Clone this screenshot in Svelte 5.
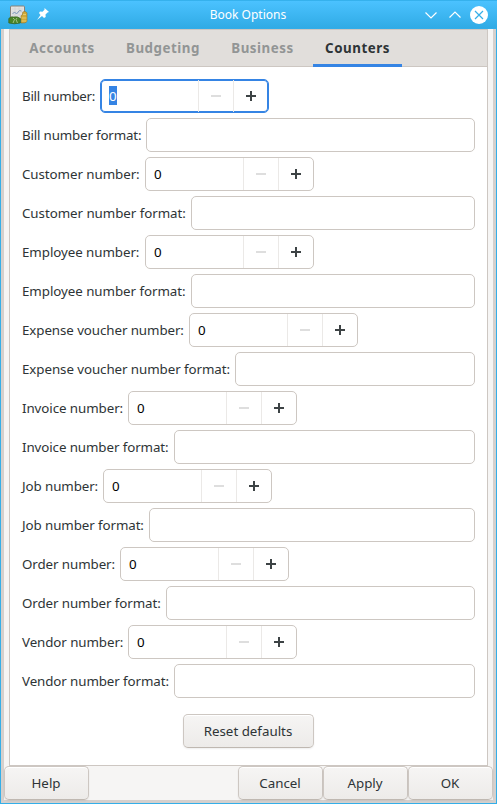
<script>
  // label, label column width, letter spacing, whether the row is a counter
  const rows = [
    ['Bill number', 78, -0.25, true], ['Bill number format', 124, -0.17],
    ['Customer number', 123, -0.06, true], ['Customer number format', 169, -0.05],
    ['Employee number', 123, -0.06, true], ['Employee number format', 169, -0.05],
    ['Expense voucher number', 167, -0.08, true], ['Expense voucher number format', 213, -0.07],
    ['Invoice number', 106, -0.07, true], ['Invoice number format', 152, -0.09],
    ['Job number', 81, -0.09, true], ['Job number format', 127, -0.09],
    ['Order number', 98, -0.08, true], ['Order number format', 144, -0.09],
    ['Vendor number', 106, -0.08, true], ['Vendor number format', 152, -0.09]
  ];
  const tabs = [['Accounts', 88], ['Budgeting', 98], ['Business', 85], ['Counters', 89]];
</script>

<div class="window">
  <header>
    <svg class="app" width="20" height="20" viewBox="0 0 20 20">
      <rect x="2.500" y="1" width="14" height="13" rx="1" fill="#e2e2e0" stroke="#85827b" />
      <path d="M4 4h11M4 7h11M4 10h11M7 2v11M11 2v11" stroke="#cdd1d3" stroke-width=".6" />
      <path d="M4.500 9l2-2 2 2 3-3.500 2 .5" fill="none" stroke="#7794b8" stroke-width="1" />
      <path d="M13 11q0-1 1.500-1V8q0-1.500 2-1.500T19 8v8.500q-1 2-6 1.500z" fill="#cfa93a" stroke="#94762a" stroke-width=".6" />
      <path d="M15 9.500h3M13.500 13h5M13.500 16h5" stroke="#ecd376" stroke-width=".8" />
      <path d="M.8 13.500q2-2.500 5-1.500 4-1 6.500 1.500V18q-6 1.500-11.500 0z" fill="#4a8527" stroke="#356020" stroke-width=".7" />
      <path d="M5 13l1.500 1.500L5 18M9 13l-1 1.500L9.500 18" stroke="#b9cf9c" stroke-width=".8" fill="none" />
    </svg>
    <svg class="pin" width="12" height="12" viewBox="0 0 12 12"><path d="M7.500 0L12 4l-1.500.5-2 2 .2 2.500L7 10 5 8 0 12l3.500-5L2 5l1-1.500 2.500.2 2-2z" fill="#fff" /></svg>
    <span class="title">Book Options</span>
    <svg class="controls" width="68" height="20" viewBox="0 0 68 20">
      <path d="M3.500 11.500l5.500 5.500 5.500-5.500M27.500 16.500l5.500-5.500 5.500 5.500" transform="translate(0 -4)" fill="none" stroke="#fff" stroke-width="1.150" />
      <circle cx="57" cy="10" r="9" fill="#fff" />
      <path d="M53 6l8 8M61 6l-8 8" stroke="#35aee8" stroke-width="1.200" />
    </svg>
  </header>
  <main>
    <section class="notebook">
      <nav>
        {#each tabs as [name, width], i}
          <div class="tab" class:active={i === 3} style="width:{width}px">{name}</div>
        {/each}
      </nav>
      <div class="form">
        {#each rows as [label, width, spacing, spin], i}
          <div class="row">
            <span class="label" style="width:{width}px;letter-spacing:{spacing}px">{label}:</span>
            {#if spin}
              <div class="entry spin" class:focus={i === 0}>
                <span class="value"><span class="digit">0</span></span>
                <span class="step"><svg width="10" height="10"><path d="M0 5h10" stroke="#dedede" stroke-width="2" /></svg></span>
                <span class="step"><svg width="10" height="10"><path d="M0 5h10M5 0v10" stroke="#3d4345" stroke-width="2" /></svg></span>
              </div>
            {:else}
              <div class="entry text"></div>
            {/if}
          </div>
        {/each}
        <button class="reset">Reset defaults</button>
      </div>
    </section>
    <footer>
      <button>Help</button><span class="space"></span>
      <button>Cancel</button><button>Apply</button><button>OK</button>
    </footer>
  </main>
</div>

<style>
  :global(body) { margin: 0; }
  * { box-sizing: border-box; }
  .window { width: 497px; height: 804px; display: flex; flex-direction: column; background: #34aee8; padding: 0 1px 1px; font: 13.333px "Noto Sans", sans-serif; color: #2e3436; }
  header { height: 29px; margin: 0 -1px; flex: none; display: flex; align-items: center; padding: 0 7px 0 8px; background: linear-gradient(#35b1ed 0 1px, #4bc2ff 1px, #30abe5 28px, #35aeeb); }
  .app { margin-top: 1px; }
  .pin { margin-left: 9px; margin-top: -2px; }
  .title { flex: 1; color: #fff; font-size: 12px; line-height: 16px; text-align: center; padding-left: 25px; }
  .controls { flex: none; }
  main { flex: 1; display: flex; flex-direction: column; background: #f6f5f4; border: 3px solid #d5d0cd; border-top: 0; }
  .notebook { height: 737px; margin: 0 5px; border: 1px solid #cdc7c2; background: #fff; }
  nav { display: flex; gap: 8px; height: 37px; padding: 0 8px; background: #e1dedb; border-bottom: 1px solid #cdc7c2; }
  .tab { height: 37px; line-height: 37px; text-align: center; font-weight: 700; letter-spacing: .53px; color: #929595; }
  .active { color: #2e3436; border-bottom: 3px solid #3584e4; }
  .form { display: flex; flex-direction: column; gap: 5px; padding: 12px 12px 0; }
  .row { display: flex; height: 34px; }
  .label { flex: none; line-height: 35px; white-space: nowrap; }
  .entry { border: 1px solid #cdc7c2; border-radius: 5px; background: #fff; }
  .text { flex: 1; }
  .spin { width: 169px; display: flex; }
  .value { flex: 1; padding-left: 8px; color: #000; line-height: 33px; }
  .step { width: 35px; border-left: 1px solid #ebe9e7; display: flex; align-items: center; justify-content: center; }
  .focus { border-color: #3584e4; box-shadow: inset 0 0 0 1px #3584e4; }
  .focus .value { padding-top: 6px; line-height: 19px; }
  .focus .digit { display: inline-block; height: 19px; line-height: 21px; background: #3584e4; color: #fff; }
  button { width: 85px; height: 34px; padding: 0 1px 1px 0; font: inherit; color: inherit; border: 1px solid #cdc7c2; border-bottom-color: #bfb8b1; border-radius: 5px; background: linear-gradient(#f6f5f4, #edebe9); box-shadow: inset 0 1px #fff, 0 1px 2px #00000012; }
  .reset { width: 131px; margin-top: 11px; align-self: center; }
  footer { display: flex; height: 34px; }
  .space { flex: 1; }
</style>
